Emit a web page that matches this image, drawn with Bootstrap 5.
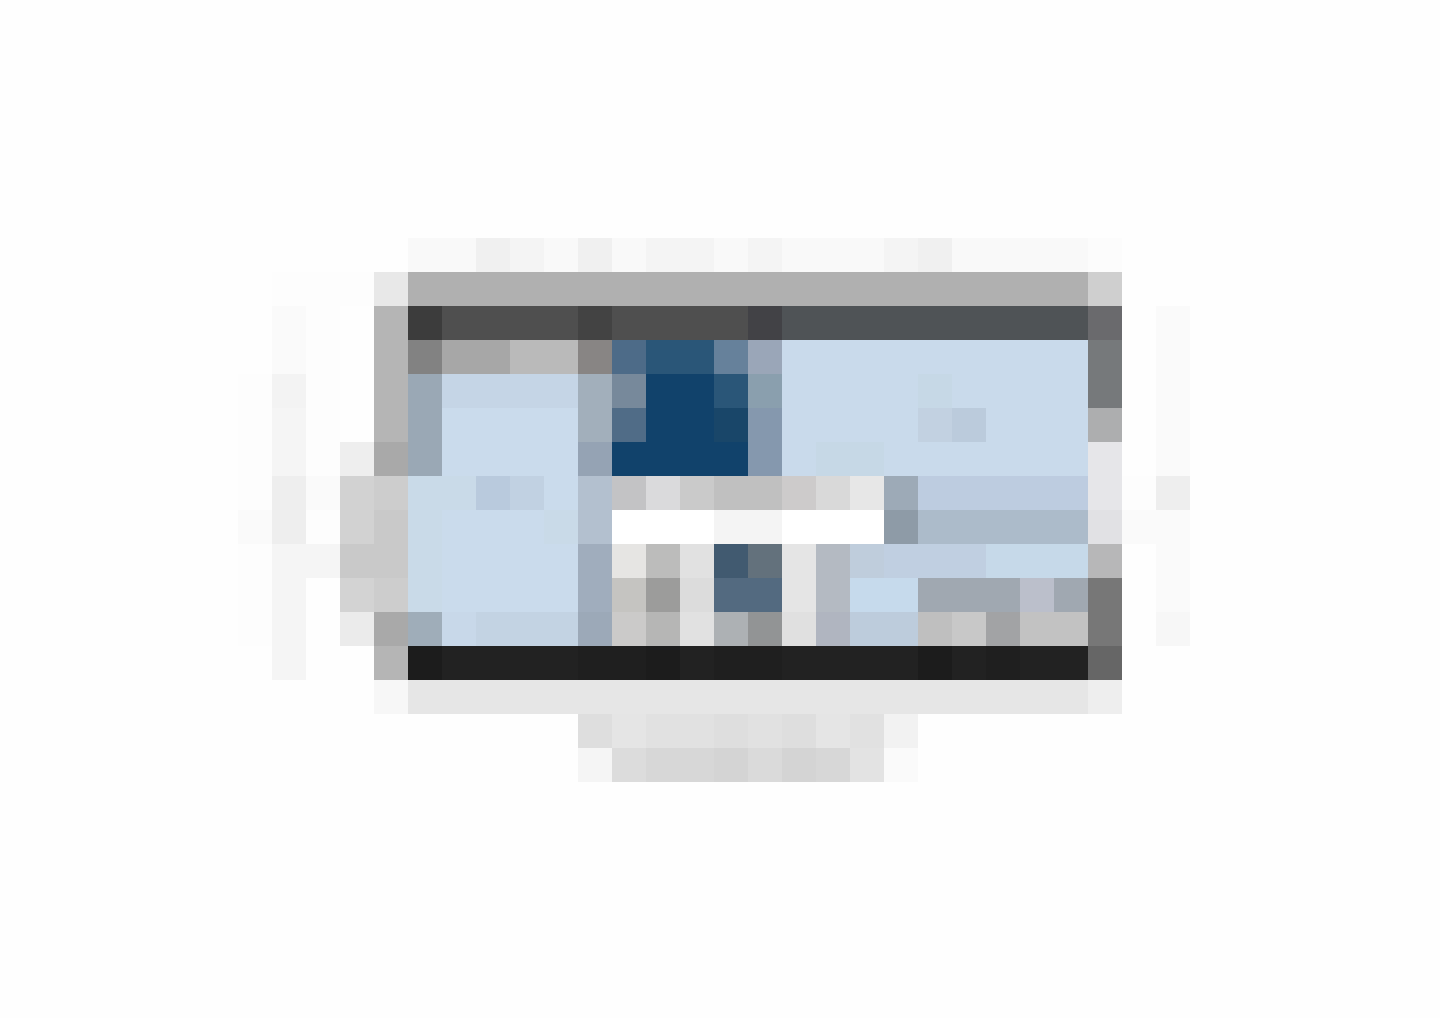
<!DOCTYPE html>
<html lang="en">
<head>
<meta charset="utf-8">
<meta name="viewport" content="width=device-width, initial-scale=1">
<title>Pixel mosaic</title>
<link rel="stylesheet" href="https://cdn.jsdelivr.net/npm/bootstrap@5.3.0/dist/css/bootstrap.min.css">
<style>
  body { background: #fefefe; font-family: "Liberation Sans", Arial, sans-serif; }
  .mosaic { shape-rendering: crispEdges; }
</style>
</head>
<body>
<main class="container-fluid p-0">
<svg class="mosaic d-block w-100 h-auto" viewBox="0 0 1440 1018" role="img" aria-label="Pixelated picture of a blue room in a dark frame">
<g transform="scale(34)">
<!-- top shadow row -->
<g transform="translate(0 7)">
<path fill="#f9f9f9" d="M12 0h20v1h-20z"/><path fill="#f0f0f0" d="M14 0h1v1h-1zM17 0h1v1h-1zM27 0h1v1h-1z"/><path fill="#f4f4f4" d="M15 0h1v1h-1zM19 0h2v1h-2zM22 0h1v1h-1zM26 0h1v1h-1z"/><path fill="#fcfcfc" d="M32 0h1v1h-1z"/>
</g>
<!-- left and right halo -->
<path fill="#fdfdfd" d="M8 8h3v1h-3zM9 9h1v5h-1zM7 11h1v4h-1zM7 16h1v3h-1zM9 15h1v1h-1zM33 14h1v1h-1z"/>
<path fill="#fafafa" d="M8 9h1v2h-1zM9 14h1v1h-1zM7 15h1v1h-1zM34 9h1v9h-1zM33 15h1v1h-1z"/>
<path fill="#f3f3f3" d="M8 11h1v1h-1z"/><path fill="#f5f5f5" d="M8 12h1v8h-1zM9 16h1v1h-1z"/>
<path fill="#eeeeee" d="M8 14h1v2h-1zM34 14h1v1h-1z"/><path fill="#f7f7f7" d="M34 18h1v1h-1z"/>
<path fill="#eeeeee" d="M10 13h1v1h-1z"/><path fill="#d2d2d2" d="M10 14h1v2h-1z"/><path fill="#c9c9c9" d="M10 16h1v1h-1z"/><path fill="#d3d3d3" d="M10 17h1v1h-1z"/><path fill="#ebebeb" d="M10 18h1v1h-1z"/>
<!-- frame, left side -->
<path fill="#e8e8e8" d="M11 8h1v1h-1z"/><path fill="#b5b5b5" d="M11 9h1v4h-1zM11 19h1v1h-1z"/><path fill="#a9a9a9" d="M11 13h1v1h-1zM11 18h1v1h-1z"/><path fill="#cdcdcd" d="M11 14h1v1h-1zM11 17h1v1h-1z"/><path fill="#c9c9c9" d="M11 15h1v2h-1z"/>
<!-- frame, top -->
<path fill="#b0b0b0" d="M12 8h20v1h-20z"/><path fill="#cfcfcf" d="M32 8h1v1h-1z"/>
<path fill="#4f4f4f" d="M12 9h11v1h-11z"/><path fill="#3c3c3c" d="M12 9h1v1h-1z"/><path fill="#434343" d="M17 9h1v1h-1z"/><path fill="#424246" d="M22 9h1v1h-1z"/><path fill="#4f5356" d="M23 9h9v1h-9z"/>
<!-- pale blue walls -->
<path fill="#cadbec" d="M12 10h5v9h-5z"/><path fill="#c9daeb" d="M23 10h9v4h-9z"/>
<!-- left wall -->
<path fill="#828282" d="M12 10h1v1h-1z"/><path fill="#a7a7a7" d="M13 10h2v1h-2z"/><path fill="#bababa" d="M15 10h2v1h-2z"/>
<path fill="#9aa8b5" d="M12 11h1v3h-1z"/><path fill="#c5d5e6" d="M13 11h4v1h-4z"/>
<path fill="#c9dae8" d="M12 14h2v1h-2zM12 15h1v3h-1zM16 15h1v1h-1z"/><path fill="#b9cadd" d="M14 14h1v1h-1z"/><path fill="#c1d1e2" d="M15 14h1v1h-1z"/>
<path fill="#9fadb9" d="M12 18h1v1h-1z"/><path fill="#c8d8e9" d="M13 18h1v1h-1z"/><path fill="#c3d3e3" d="M14 18h3v1h-3z"/>
<!-- left upright -->
<path fill="#888584" d="M17 10h1v1h-1z"/><path fill="#a2afbb" d="M17 11h1v2h-1z"/><path fill="#95a3b4" d="M17 13h1v1h-1z"/><path fill="#b3c0cf" d="M17 14h1v2h-1z"/><path fill="#a0adbd" d="M17 16h1v2h-1z"/><path fill="#9ca9b8" d="M17 18h1v1h-1z"/>
<!-- navy panel -->
<path fill="#11426b" d="M18 10h4v4h-4z"/><path fill="#4d6b88" d="M18 10h1v1h-1z"/><path fill="#2a5678" d="M19 10h2v1h-2zM21 11h1v1h-1z"/><path fill="#66819b" d="M21 10h1v1h-1z"/><path fill="#77899b" d="M18 11h1v1h-1z"/><path fill="#506c87" d="M18 12h1v1h-1z"/><path fill="#194669" d="M21 12h1v1h-1z"/>
<path fill="#9aa6b8" d="M22 10h1v1h-1z"/><path fill="#8a9fae" d="M22 11h1v1h-1z"/><path fill="#8598ae" d="M22 12h1v2h-1z"/>
<!-- right wall details -->
<path fill="#c6d8e6" d="M27 11h1v1h-1zM24 13h2v1h-2z"/><path fill="#c2d1e1" d="M27 12h1v1h-1z"/><path fill="#bbcbdc" d="M28 12h1v1h-1z"/>
<!-- counter edge -->
<path fill="#c3c3c5" d="M18 14h1v1h-1z"/><path fill="#dadadc" d="M19 14h1v1h-1z"/><path fill="#cacaca" d="M20 14h1v1h-1z"/><path fill="#c0c0c0" d="M21 14h2v1h-2z"/><path fill="#cdcbcb" d="M23 14h1v1h-1z"/><path fill="#d9d9d9" d="M24 14h1v1h-1z"/><path fill="#e7e7e7" d="M25 14h1v1h-1z"/><path fill="#9daab7" d="M26 14h1v1h-1z"/><path fill="#bdcce0" d="M27 14h5v1h-5z"/>
<path fill="#ffffff" d="M18 15h8v1h-8z"/><path fill="#f4f4f4" d="M21 15h2v1h-2z"/><path fill="#8e9ba7" d="M26 15h1v1h-1z"/><path fill="#acbbca" d="M27 15h5v1h-5z"/>
<!-- below the counter -->
<path fill="#e6e5e3" d="M18 16h1v1h-1z"/><path fill="#bcbcbb" d="M19 16h1v1h-1z"/><path fill="#e1e1e1" d="M20 16h1v1h-1zM20 18h1v1h-1z"/><path fill="#415a70" d="M21 16h1v1h-1z"/><path fill="#63717c" d="M22 16h1v1h-1z"/><path fill="#e5e5e5" d="M23 16h1v2h-1z"/><path fill="#b4bac2" d="M24 16h1v2h-1z"/>
<path fill="#bfcddc" d="M25 16h1v1h-1z"/><path fill="#c0cfe1" d="M26 16h3v1h-3z"/><path fill="#c6d9e9" d="M29 16h3v1h-3z"/>
<path fill="#c5c4c1" d="M18 17h1v1h-1z"/><path fill="#9c9c9b" d="M19 17h1v1h-1z"/><path fill="#dcdcdc" d="M20 17h1v1h-1z"/><path fill="#536a80" d="M21 17h2v1h-2z"/><path fill="#c6daec" d="M25 17h2v1h-2z"/><path fill="#a0a8b1" d="M27 17h5v1h-5z"/><path fill="#bbbfcb" d="M30 17h1v1h-1z"/>
<path fill="#cbcac9" d="M18 18h1v1h-1z"/><path fill="#b6b6b5" d="M19 18h1v1h-1z"/><path fill="#adb1b4" d="M21 18h1v1h-1z"/><path fill="#929495" d="M22 18h1v1h-1z"/><path fill="#e0e0e0" d="M23 18h1v1h-1z"/><path fill="#b0b5c0" d="M24 18h1v1h-1z"/><path fill="#bdccdc" d="M25 18h2v1h-2z"/><path fill="#bfbfbf" d="M27 18h1v1h-1z"/><path fill="#c8c8c8" d="M28 18h1v1h-1z"/><path fill="#a2a3a5" d="M29 18h1v1h-1z"/><path fill="#c2c2c2" d="M30 18h2v1h-2z"/>
<!-- frame, right side -->
<path fill="#6a6a6d" d="M32 9h1v1h-1z"/><path fill="#76797b" d="M32 10h1v2h-1z"/><path fill="#adaeaf" d="M32 12h1v1h-1z"/><path fill="#e6e6e9" d="M32 13h1v2h-1z"/><path fill="#e1e1e4" d="M32 15h1v1h-1z"/><path fill="#b7b7b8" d="M32 16h1v1h-1z"/><path fill="#777777" d="M32 17h1v2h-1z"/><path fill="#666666" d="M32 19h1v1h-1z"/>
<!-- frame, bottom -->
<path fill="#222222" d="M12 19h20v1h-20z"/><path fill="#1c1c1c" d="M12 19h1v1h-1zM19 19h1v1h-1zM27 19h1v1h-1z"/><path fill="#1f1f1f" d="M17 19h2v1h-2zM21 19h2v1h-2zM29 19h1v1h-1z"/>
<path fill="#f7f7f7" d="M11 20h1v1h-1z"/><path fill="#e6e6e6" d="M12 20h20v1h-20z"/><path fill="#eeeeee" d="M32 20h1v1h-1z"/>
<!-- foot -->
<path fill="#e1e1e1" d="M17 21h9v1h-9z"/><path fill="#dedede" d="M17 21h1v1h-1zM21 21h1v1h-1zM23 21h1v1h-1z"/><path fill="#e5e5e5" d="M18 21h1v1h-1zM24 21h1v1h-1z"/><path fill="#f2f2f2" d="M26 21h1v1h-1z"/>
<path fill="#f5f5f5" d="M17 22h1v1h-1z"/><path fill="#dcdcdc" d="M18 22h1v1h-1z"/><path fill="#d7d7d7" d="M19 22h6v1h-6z"/><path fill="#dadada" d="M22 22h1v1h-1z"/><path fill="#d4d4d4" d="M21 22h1v1h-1zM23 22h1v1h-1z"/><path fill="#e3e3e3" d="M25 22h1v1h-1z"/><path fill="#fafafa" d="M26 22h1v1h-1z"/>
</g>
</svg>
</main>
<script src="https://cdn.jsdelivr.net/npm/bootstrap@5.3.0/dist/js/bootstrap.bundle.min.js"></script>
</body>
</html>
